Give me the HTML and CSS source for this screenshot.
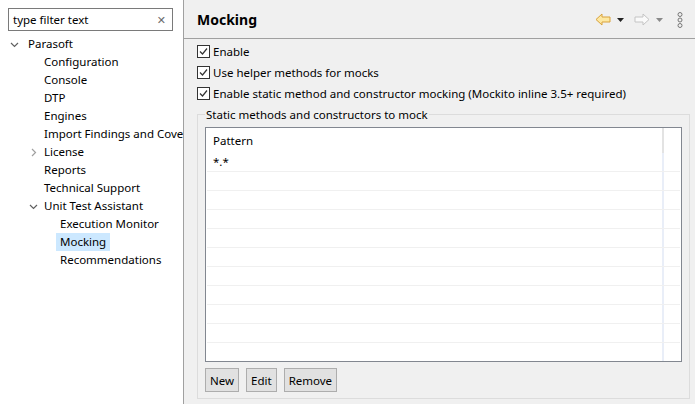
FILE: index.html
```html
<!DOCTYPE html>
<html lang="en">
  <head>
    <meta charset="UTF-8" />
    <title>Preferences - Mocking</title>
    <link rel="stylesheet" href="styles.css">
  </head>
  <body>
    <div class="sidebar">
      <div class="filter">
        <span class="filter-text">type filter text</span>
        <span class="filter-clear">&#x2715;</span>
      </div>

      <ul class="tree">
        <li class="node lvl0">
          <svg class="twisty" width="9" height="9" viewBox="0 0 9 9"><polyline points="1,3 4.5,6.5 8,3" fill="none" stroke="#606060" stroke-width="1.2"/></svg>
          Parasoft
        </li>
        <li class="node lvl1">Configuration</li>
        <li class="node lvl1">Console</li>
        <li class="node lvl1">DTP</li>
        <li class="node lvl1">Engines</li>
        <li class="node lvl1">Import Findings and Coverage</li>
        <li class="node lvl1 has-twisty">
          <svg class="twisty" width="9" height="9" viewBox="0 0 9 9"><polyline points="3,1 6.5,4.5 3,8" fill="none" stroke="#a0a0a0" stroke-width="1.2"/></svg>
          License
        </li>
        <li class="node lvl1">Reports</li>
        <li class="node lvl1">Technical Support</li>
        <li class="node lvl1 has-twisty">
          <svg class="twisty" width="9" height="9" viewBox="0 0 9 9"><polyline points="1,3 4.5,6.5 8,3" fill="none" stroke="#606060" stroke-width="1.2"/></svg>
          Unit Test Assistant
        </li>
        <li class="node lvl2">Execution Monitor</li>
        <li class="node lvl2"><span class="selected">Mocking</span></li>
        <li class="node lvl2">Recommendations</li>
      </ul>
    </div>

    <div class="main">
      <div class="header">
        <h1>Mocking</h1>
        <div class="nav">
          <!-- back -->
          <svg width="16" height="13" viewBox="0 0 16 13"><path d="M1 6.5 L7 1 V4 H15 V9 H7 V12 Z" fill="#fde8a2" stroke="#d9a23a" stroke-width="1" stroke-linejoin="round"/></svg>
          <svg class="drop" width="7" height="4" viewBox="0 0 7 4"><path d="M0 0 H7 L3.5 4 Z" fill="#222"/></svg>
          <!-- forward -->
          <svg width="16" height="13" viewBox="0 0 16 13"><path d="M15 6.5 L9 1 V4 H1 V9 H9 V12 Z" fill="#fafafa" stroke="#c4c4c4" stroke-width="1" stroke-linejoin="round"/></svg>
          <svg class="drop" width="7" height="4" viewBox="0 0 7 4"><path d="M0 0 H7 L3.5 4 Z" fill="#8a8a8a"/></svg>
          <!-- menu -->
          <svg class="menu" width="6" height="16" viewBox="0 0 6 16"><circle cx="3" cy="2.5" r="2" fill="none" stroke="#777"/><circle cx="3" cy="8" r="2" fill="none" stroke="#777"/><circle cx="3" cy="13.5" r="2" fill="none" stroke="#777"/></svg>
        </div>
      </div>

      <div class="options">
        <label class="check">
          <span class="box"><svg width="11" height="11" viewBox="0 0 11 11"><polyline points="2,5.5 4.5,8 9,2.5" fill="none" stroke="#333" stroke-width="1.2"/></svg></span>
          Enable
        </label>
        <label class="check">
          <span class="box"><svg width="11" height="11" viewBox="0 0 11 11"><polyline points="2,5.5 4.5,8 9,2.5" fill="none" stroke="#333" stroke-width="1.2"/></svg></span>
          Use helper methods for mocks
        </label>
        <label class="check">
          <span class="box"><svg width="11" height="11" viewBox="0 0 11 11"><polyline points="2,5.5 4.5,8 9,2.5" fill="none" stroke="#333" stroke-width="1.2"/></svg></span>
          Enable static method and constructor mocking (Mockito inline 3.5+ required)
        </label>
      </div>

      <fieldset class="group">
        <legend>Static methods and constructors to mock</legend>
        <div class="table">
          <div class="row head"><div class="cell">Pattern</div></div>
          <div class="row"><div class="cell">*.*</div></div>
          <div class="row"><div class="cell"></div></div>
          <div class="row"><div class="cell"></div></div>
          <div class="row"><div class="cell"></div></div>
          <div class="row"><div class="cell"></div></div>
          <div class="row"><div class="cell"></div></div>
          <div class="row"><div class="cell"></div></div>
          <div class="row"><div class="cell"></div></div>
          <div class="row"><div class="cell"></div></div>
          <div class="row"><div class="cell"></div></div>
          <div class="row last"><div class="cell"></div></div>
        </div>
        <div class="buttons">
          <button class="btn">New</button>
          <button class="btn">Edit</button>
          <button class="btn">Remove</button>
        </div>
      </fieldset>
    </div>
  </body>
</html>
```

FILE: styles.css
```css
* {
  box-sizing: border-box;
}

body {
  margin: 0;
  width: 695px;
  height: 404px;
  display: flex;
  overflow: hidden;
  font-family: "Noto Sans", "DejaVu Sans", sans-serif;
  font-size: 11.5px;
  color: #000;
  background-color: #f0f0f0;
}

/* left tree */
.sidebar {
  width: 184px;
  flex-shrink: 0;
  background-color: #fff;
  border-right: 1px solid #a0a0a0;
  padding: 8px 0 0 8px;
  overflow: hidden;
}

.filter {
  width: 165px;
  height: 23px;
  border: 1px solid #7a7a7a;
  display: flex;
  align-items: center;
  justify-content: space-between;
  padding: 0 6px 0 4px;
}

.filter-clear {
  font-size: 11px;
  color: #6d6d6d;
}

.tree {
  list-style: none;
  margin: 4px 0 0 0;
  padding: 0;
}

.node {
  height: 18px;
  line-height: 18px;
  white-space: nowrap;
  position: relative;
}

.lvl0 {
  padding-left: 20px;
}

.lvl1 {
  padding-left: 36px;
}

.lvl2 {
  padding-left: 52px;
}

.twisty {
  position: absolute;
  top: 5px;
  left: 2px;
}

.has-twisty .twisty {
  left: 21px;
}

.selected {
  background-color: #cce8ff;
  display: inline-block;
  padding: 0 4px;
  margin-left: -4px;
}

/* right page */
.main {
  flex: 1;
  display: flex;
  flex-direction: column;
  min-width: 0;
}

.header {
  height: 39px;
  border-bottom: 1px solid #a0a0a0;
  display: flex;
  align-items: center;
  justify-content: space-between;
  padding: 1px 12px 0 13px;
}

h1 {
  margin: 0;
  font-size: 14px;
  font-weight: bold;
}

.nav {
  display: flex;
  align-items: center;
}

.nav .drop {
  margin: 0 10px 0 6px;
}

.nav .menu {
  margin-left: 4px;
}

.options {
  padding: 2px 0 1px 13px;
}

.check {
  height: 21px;
  display: flex;
  align-items: center;
}

.box {
  width: 13px;
  height: 13px;
  border: 1px solid #333;
  background-color: #fff;
  margin-right: 3px;
  display: flex;
  align-items: center;
  justify-content: center;
}

.group {
  margin: 2px 5px 0 13px;
  border: 1px solid #dcdcdc;
  padding: 5px 7px 6px 7px;
}

.group legend {
  padding: 0 1px;
  margin-left: 0;
}

.table {
  height: 235px;
  border: 1px solid #828790;
  background-color: #fff;
  padding: 0 1px;
  overflow: hidden;
}

.row {
  height: 19px;
  border-bottom: 1px solid #f0f0f0;
}

.row.head {
  height: 25px;
  border-bottom: none;
}

.row.last {
  border-bottom: none;
}

.cell {
  width: 457px;
  height: 100%;
  border-right: 2px solid #e9eef8;
  padding-left: 6px;
  line-height: 18px;
}

.head .cell {
  border-right-color: #e3e3e3;
  line-height: 26px;
}

.buttons {
  display: flex;
  gap: 7px;
  margin-top: 6px;
}

.btn {
  height: 24px;
  padding: 0 4px;
  font-family: inherit;
  font-size: 11.5px;
  background-color: #e1e1e1;
  border: 1px solid #adadad;
  border-radius: 0;
}
```
